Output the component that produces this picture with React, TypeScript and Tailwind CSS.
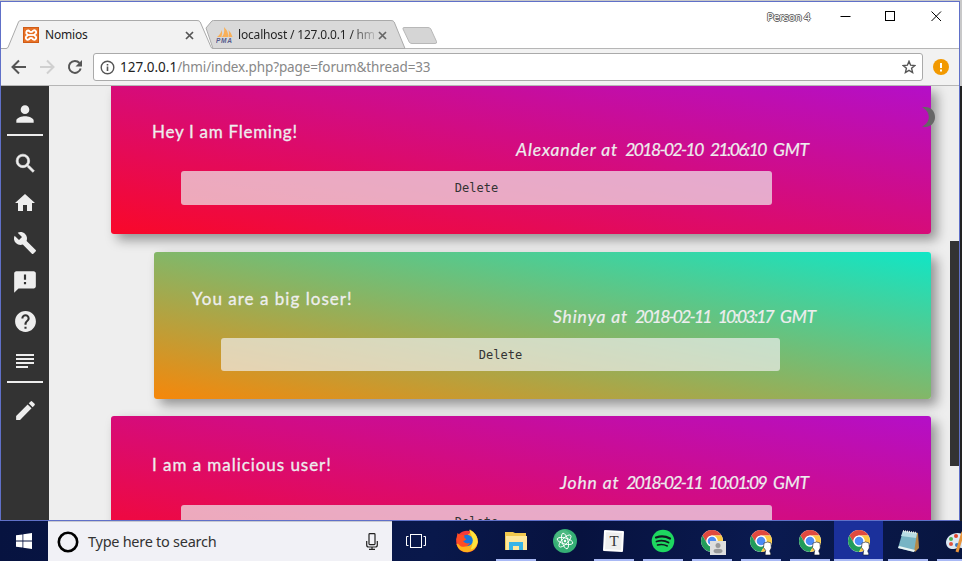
import React from "react";

type PostProps = {
  message: string;
  author: string;
  date: string;
  time: string;
  card: string;
  messageClass: string;
  authorClass: string;
  nameClass: string;
  dateClass: string;
  timeClass: string;
  buttonClass: string;
};

function Post({ message, author, date, time, card, messageClass, authorClass, nameClass, dateClass, timeClass, buttonClass }: PostProps) {
  return (
    <article className={`flex shrink-0 flex-col font-['Lato',sans-serif] text-[#eee] shadow-[6px_6px_12px_rgba(0,0,0,0.38)] ${card}`}>
      <p className={`h-5 whitespace-nowrap text-[17px] leading-5 [-webkit-text-stroke:0.3px_#eee] ${messageClass}`}>{message}</p>
      <p className={`-mt-0.5 flex h-5 justify-between self-end whitespace-nowrap text-[17.5px] italic leading-5 [-webkit-text-stroke:0.2px_#eee] ${authorClass}`}>
        <span className={nameClass}>{author} at</span>
        <span className={dateClass}>{date}</span>
        <span className={timeClass}>{time}</span>
        <span className="tracking-[-0.2px]">GMT</span>
      </p>
      <button className={`shrink-0 rounded-[3px] bg-[#eee]/70 font-['DejaVu_Sans_Mono',monospace] text-[12px] text-[#333] ${buttonClass}`}>
        Delete
      </button>
    </article>
  );
}

function Glyph({ d, className = "" }: { d: string; className?: string }) {
  return (
    <svg viewBox="0 0 24 24" className={`shrink-0 fill-[#eee] ${className}`}>
      <path d={d} />
    </svg>
  );
}

function Sidebar() {
  return (
    <nav className="flex w-12 shrink-0 flex-col items-center bg-[#333] pt-[15px]">
      <Glyph className="size-[26px]" d="M12 12c2.21 0 4-1.79 4-4s-1.79-4-4-4-4 1.79-4 4 1.79 4 4 4zm0 2c-2.67 0-8 1.34-8 4v2h16v-2c0-2.66-5.33-4-8-4z" />
      <div className="mt-[7px] h-0.5 w-9 shrink-0 bg-[#eee]" />
      <Glyph className="mt-[15px] size-[25px] stroke-[#eee] stroke-[0.6]" d="M15.5 14h-.79l-.28-.27A6.471 6.471 0 0 0 16 9.5 6.5 6.5 0 1 0 9.5 16c1.61 0 3.09-.59 4.23-1.57l.27.28v.79l5 4.99L20.49 19l-4.99-5zm-6 0C7.01 14 5 11.99 5 9.5S7.01 5 9.5 5 14 7.01 14 9.5 11.99 14 9.5 14z" />
      <Glyph className="mt-[15px] size-6" d="M10 20v-6h4v6h5v-8h3L12 3 2 12h3v8z" />
      <Glyph className="mt-4 size-6" d="M22.7 19l-9.1-9.1c.9-2.3.4-5-1.5-6.9-2-2-5-2.4-7.4-1.3L9 6 6 9 1.6 4.7C.4 7.1.9 10.1 2.9 12.1c1.9 1.9 4.6 2.4 6.9 1.5l9.1 9.1c.4.4 1 .4 1.4 0l2.3-2.3c.5-.4.5-1.1.1-1.4z" />
      <Glyph className="mt-[14px] size-[26px]" d="M20 2H4c-1.1 0-1.99.9-1.99 2L2 22l4-4h14c1.1 0 2-.9 2-2V4c0-1.1-.9-2-2-2zm-7 12h-2v-2h2v2zm0-4h-2V5h2v5z" />
      <Glyph className="mt-[14px] size-[25px]" d="M12 2C6.48 2 2 6.48 2 12s4.48 10 10 10 10-4.48 10-10S17.52 2 12 2zm1 17h-2v-2h2v2zm2.07-7.75l-.9.92C13.45 12.9 13 13.5 13 15h-2v-.5c0-1.1.45-2.1 1.17-2.83l1.24-1.26c.37-.36.59-.86.59-1.41 0-1.1-.9-2-2-2s-2 .9-2 2H8c0-2.21 1.79-4 4-4s4 1.790 4 4c0 .88-.36 1.680-.93 2.250z" />
      <div className="mt-5 flex w-[18px] flex-col gap-0.5">
        <div className="h-0.5 bg-[#eee]" />
        <div className="h-0.5 bg-[#eee]" />
        <div className="h-0.5 bg-[#eee]" />
        <div className="h-0.5 w-3 bg-[#eee]" />
      </div>
      <div className="mt-[13px] h-0.5 w-9 shrink-0 bg-[#eee]" />
      <Glyph className="mt-[15px] size-[25px]" d="M3 17.25V21h3.75L17.81 9.94l-3.75-3.75L3 17.25zM20.71 7.04a.996.996 0 0 0 0-1.41l-2.34-2.34a.996.996 0 0 0-1.41 0l-1.83 1.83 3.75 3.75 1.83-1.83z" />
    </nav>
  );
}

function TabStrip() {
  return (
    <header className="relative flex h-[47px] shrink-0 items-start border-b border-[#b6b6b6] bg-white font-['Noto_Sans',sans-serif] text-[12px] text-[#222]">
      <svg className="absolute left-0 top-[17px]" width="450" height="30" viewBox="1 19 450 30">
        <path d="M206 28 211 22q.7-1.500 2.500-1.500H391q2.500 0 3.200 1.500L405 48.500H213Z" fill="#d9d9d9" stroke="#aaa" />
        <path d="M1 48.500H6q1.500 0 2.200-1.500L18.500 22q.5-1.500 2.500-1.500H197q2.500 0 3.200 1.500L211 47q.6 1.500 2 1.500V50H1Z" fill="#f2f2f2" />
        <path d="M1 48.500H6q1.500 0 2.200-1.500L18.500 22q.5-1.500 2.500-1.500H197q2.500 0 3.200 1.500L211 47q.6 1.500 2 1.500" fill="none" stroke="#aaa" />
        <path d="M404 27.500H428q2 0 2.800 1.500L436.500 41.500q.7 2-1.500 2H412q-2 0-2.800-1.500L403 29q-.3-1.500 1-1.500Z" fill="#d5d5d5" stroke="#b8b8b8" />
      </svg>
      <div className="relative mt-[25px] flex h-4 w-[212px] shrink-0 items-center pl-[22px]">
        <svg width="16" height="16" viewBox="0 0 16 16">
          <rect width="16" height="16" rx="1" fill="#e87126" />
          <rect x=".5" y=".5" width="15" height="15" fill="none" stroke="#cf5c16" />
          <path d="M5.200 3.500a2 2 0 0 0-1 3.700q.7.800 0 1.600a2 2 0 1 0 2.500 2.600q1.300-.7 2.600 0a2 2 0 1 0 2.500-2.600q-.7-.8 0-1.600a2 2 0 1 0-2.500-2.600q-1.300.7-2.600 0a2 2 0 0 0-1.500-1.100Z" fill="none" stroke="#fff" strokeWidth="1.900" />
          <path d="M5 8h6" stroke="#fff" strokeWidth="1.800" />
        </svg>
        <span className="ml-[6px] tracking-[-0.2px]">Nomios</span>
        <svg className="absolute left-[184px] top-1" width="9" height="9" viewBox="0 0 9 9"><path d="m1 1 7 7M8 1 1 8" stroke="#555" strokeWidth="1.700" /></svg>
      </div>
      <div className="relative mt-[25px] flex h-4 w-[180px] shrink-0 items-center pl-[3px]">
        <svg width="17" height="16" viewBox="0 0 17 16">
          <path d="M1 10Q5 7 5.500 3 7 6 5.500 10ZM6 10Q9 6 8 0q5 5 4 10ZM12.500 10q1-4 0-7 3 3 4 7Z" fill="#f8b059" />
          <text x="0" y="15.500" fontFamily="Liberation Sans, sans-serif" fontSize="6.500" fontWeight="700" fontStyle="italic" fill="#565b8d" textLength="16">PMA</text>
        </svg>
        <span className="ml-[5px] whitespace-nowrap bg-linear-to-r from-[#222] from-82% to-[#222]/15 bg-clip-text tracking-[-0.18px] text-transparent">localhost / 127.0.0.1 / hm</span>
        <svg className="absolute left-[165px] top-1" width="9" height="9" viewBox="0 0 9 9"><path d="m1 1 7 7M8 1 1 8" stroke="#666" strokeWidth="1.700" /></svg>
      </div>
      <div className="flex grow items-center justify-end pr-[17px] pt-[7px]">
        <span className="mr-[30px] text-[11px] leading-4 tracking-[-0.3px] text-white [text-shadow:1px_0_#666,-1px_0_#666,0_1px_#666,0_-1px_#666]">Person 4</span>
        <svg width="102" height="12" viewBox="0 0 102 12" fill="none" stroke="#000">
          <path d="M.5 5.500h10" />
          <rect x="45.500" y=".5" width="9" height="9" />
          <path d="m91.500.500 9.500 9.500M101 .500l-9.500 9.500" />
        </svg>
      </div>
    </header>
  );
}

function Toolbar() {
  return (
    <div className="flex h-[37px] shrink-0 items-center border-b border-[#b6b6b6] bg-[#f2f2f2] font-['Noto_Sans',sans-serif]">
      <svg width="92" height="36" viewBox="1 49 92 36" fill="none" stroke="#555" strokeWidth="2">
        <path d="M26 67H13M19 60.500 12.500 67l6.500 6.500" />
        <path d="M40 67h13M47 60.500l6.500 6.500-6.500 6.500" stroke="#d0d0d0" />
        <path d="M79.500 63a6 6 0 1 0 1.200 5.500" />
        <path d="M82 60v6.500h-6.500Z" fill="#555" stroke="none" />
      </svg>
      <div className="flex h-7 w-[830px] items-center rounded-[3px] border border-[#aaa] bg-white pl-[6px] pr-[6px]">
        <svg width="15" height="15" viewBox="0 0 15 15"><circle cx="7.500" cy="7.500" r="6.300" fill="none" stroke="#555" strokeWidth="1.400" /><path d="M7.500 6.500V11M7.500 4v1.500" stroke="#555" strokeWidth="1.600" /></svg>
        <span className="ml-[5px] grow whitespace-nowrap text-[13.5px] leading-6 tracking-[-0.12px] text-[#888]"><span className="tracking-normal text-[#222]">127.0.0.1</span>/hmi/index.php?page=forum&amp;thread=33</span>
        <svg width="14" height="14" viewBox="0 0 14 14"><path d="m7 1.300 1.600 3.900 4.200.4-3.200 2.700 1 4.200L7 10.300l-3.600 2.200 1-4.200L1.200 5.600l4.200-.4Z" fill="none" stroke="#555" strokeWidth="1.400" /></svg>
      </div>
      <svg className="ml-[10px]" width="16" height="16" viewBox="0 0 16 16"><circle cx="8" cy="8" r="8" fill="#f29900" /><path d="M8 4v5M8 10.500v2" stroke="#fff" strokeWidth="2" /></svg>
    </div>
  );
}

function Forum() {
  return (
    <main className="relative flex grow overflow-hidden bg-[#eee]">
      <Sidebar />
      <section className="flex w-[882px] flex-col items-end">
        <Post
          message="Hey I am Fleming!"
          author="Alexander"
          date="2018-02-10"
          time="21:06:10"
          card="h-[148px] w-[820px] rounded-b-[3px] bg-[linear-gradient(to_top_right,#f90829,#b40fc8)] pt-9"
          messageClass="ml-[41px] tracking-[0.72px]"
          authorClass="mr-[122px] w-[293px]"
          nameClass="tracking-[0.85px]"
          dateClass="tracking-[-1.6px]"
          timeClass="tracking-[-1.6px]"
          buttonClass="ml-[70px] mt-[11px] h-[34px] w-[591px]"
        />
        <Post
          message="You are a big loser!"
          author="Shinya"
          date="2018-02-11"
          time="10:03:17"
          card="mt-[18px] h-[147px] w-[777px] rounded-[3px] bg-[linear-gradient(to_top_right,#f6870a,#10e6c6)] pt-[37px]"
          messageClass="ml-[38px] tracking-[1.02px]"
          authorClass="mr-[115px] w-[263px]"
          nameClass="tracking-[0.85px]"
          dateClass="tracking-[-1.8px]"
          timeClass="tracking-[-1.8px]"
          buttonClass="ml-[67px] mt-[11px] h-[33px] w-[559px]"
        />
        <Post
          message="I am a malicious user!"
          author="John"
          date="2018-02-11"
          time="10:01:09"
          card="mt-[17px] h-[147px] w-[820px] rounded-[3px] bg-[linear-gradient(to_top_right,#f90829,#b40fc8)] pt-[39px]"
          messageClass="ml-[41px] tracking-[0.95px]"
          authorClass="mr-[122px] w-[249px]"
          nameClass="tracking-[0.85px]"
          dateClass="tracking-[-1.8px]"
          timeClass="tracking-[-1.5px]"
          buttonClass="ml-[70px] mt-[12px] h-[34px] w-[591px]"
        />
      </section>
      <svg className="absolute left-[921px] top-[21px]" width="14" height="20" viewBox="0 0 14 20"><path d="M0 .5C8-1.500 13 4 13 10S8 21.500 0 19.500C9 16 9 4 0 .5Z" fill="#666" /></svg>
      <div className="absolute right-0 top-[155px] h-[225px] w-[9px] bg-[#333]" />
    </main>
  );
}

function Slot({ children, bar = true, active = false }: { children: React.ReactNode; bar?: boolean; active?: boolean }) {
  return (
    <div className={`flex h-full w-[49px] shrink-0 flex-col items-center justify-between pt-2 ${active ? "bg-[#1b309b]" : ""}`}>
      {children}
      {bar && <div className={`h-0.5 bg-[#a9b9f5] ${active ? "w-full" : "w-10"}`} />}
    </div>
  );
}

function Chrome({ badge }: { badge: "person" | "bust" }) {
  return (
    <svg width="28" height="28" viewBox="0 0 28 28" className="shrink-0">
      <circle cx="14" cy="12" r="11" fill="#fff" />
      <path d="M4.500 6.500A11 11 0 0 1 23.500 6.500H14A5.500 5.500 0 0 0 9.200 14.800Z" fill="#e04a3f" />
      <path d="M4.500 6.500A11 11 0 0 0 14 23L18.800 14.800A5.500 5.500 0 0 1 9.200 14.800Z" fill="#229c5a" />
      <path d="M23.500 6.500A11 11 0 0 1 14 23L18.800 14.800A5.500 5.500 0 0 0 14 6.500Z" fill="#fbcb43" />
      <circle cx="14" cy="12" r="5.500" fill="#fff" />
      <circle cx="14" cy="12" r="4.300" fill="#4c8bf5" />
      {badge === "person" ? (
        <g>
          <rect x="12" y="12" width="16" height="14" fill="#dedede" />
          <circle cx="20" cy="16.500" r="2.500" fill="#999" />
          <ellipse cx="20" cy="22" rx="4.500" ry="2.300" fill="#999" />
        </g>
      ) : (
        <path d="M17 14q4-2 7 0l.3 5-1.600 3 1 2.500v1.500h-5.500v-2l.5-2.500-2.200-3Z" fill="#fff" stroke="#111827" strokeWidth=".6" />
      )}
    </svg>
  );
}

function Taskbar() {
  return (
    <footer className="flex h-10 shrink-0 overflow-hidden bg-[linear-gradient(100deg,#071340,#09184b_45%,#07123f_60%,#0a1a50_80%,#08153f)]">
      <div className="flex w-12 shrink-0 items-center justify-center">
        <svg width="16" height="16" viewBox="0 0 16 16" fill="#fff"><path d="M0 2.300 6.500 1.400v6.200H0ZM7.300 1.300 16 0v7.600H7.300ZM0 8.400h6.500v6.200L0 13.700ZM7.300 8.400H16V16l-8.700-1.200Z" /></svg>
      </div>
      <div className="flex w-[344px] shrink-0 items-center border-t border-[#c9c9d0] bg-[#f1f1f6] pl-[9px] pr-[14px]">
        <svg width="22" height="22" viewBox="0 0 22 22"><circle cx="11" cy="11" r="9.200" fill="none" stroke="#000" strokeWidth="2.600" /></svg>
        <span className="ml-[9px] grow font-['Noto_Sans',sans-serif] text-[14.5px] tracking-[-0.27px] text-[#333]">Type here to search</span>
        <svg width="12" height="17" viewBox="0 0 12 17" fill="none" stroke="#222" strokeWidth="1.200"><rect x="3" y=".6" width="6" height="11" rx=".8" /><path d="M.7 8v4q0 2 2 2h6.600q2 0 2-2V8M6 14v2.500M3 16.400h6" /></svg>
      </div>
      <div className="flex w-[50px] shrink-0 items-center pl-[14px]">
        <svg width="20" height="16" viewBox="0 0 20 16" fill="none" stroke="#fff"><rect x="4.500" y="1.500" width="11" height="13" /><path d="M2.500 3.500h-2v9h2M17.500 3.500h2v9h-2" /></svg>
      </div>
      <Slot bar={false}>
        <svg width="24" height="24" viewBox="0 0 24 24">
          <circle cx="12" cy="12.500" r="10.800" fill="#f63b38" />
          <path d="M1.500 15q2 8 11 8.300 9-1 10.300-10Q23 5 15 .5q1 4-2 5l-4 7Z" fill="#ffb21a" />
          <path d="M14 .5Q23 5 22.800 13q-2 7-7 7.500 4-9-1.800-20Z" fill="#ffe33d" />
          <circle cx="12" cy="11.500" r="5.800" fill="#1676dd" />
          <path d="M1.300 10.500 2.500 4 5 6q3-1 4.500 1-1 2 2 3-1.500 2-3.500 2 2.500 3.500 7 2-3 5-9 3.500-3.500-2-4.700-7Z" fill="#ff4c25" />
        </svg>
      </Slot>
      <Slot>
        <svg width="22" height="24" viewBox="0 0 22 24">
          <path d="M0 3h8l2 1h11v17H0Z" fill="#f2c94e" /><path d="M1 7h21v14H1Z" fill="#ffe89c" />
          <path d="M4 13h14v8h-4v-4H8v4H4Z" fill="#36b5e8" />
        </svg>
      </Slot>
      <Slot bar={false}>
        <svg width="24" height="24" viewBox="0 0 24 24">
          <circle cx="12" cy="12" r="12" fill="#35af75" /><circle cx="10" cy="9" r="8" fill="#62c48d" opacity=".5" />
          <g fill="none" stroke="#fff" strokeWidth=".9"><ellipse cx="12" cy="12" rx="8" ry="3" transform="rotate(15 12 12)" /><ellipse cx="12" cy="12" rx="8" ry="3" transform="rotate(75 12 12)" /><ellipse cx="12" cy="12" rx="8" ry="3" transform="rotate(135 12 12)" /></g>
          <circle cx="12" cy="12" r="1.200" fill="#fff" />
        </svg>
      </Slot>
      <Slot>
        <svg width="24" height="24" viewBox="0 0 24 24"><path d="m3 2 18 1-1 19-18-1Z" fill="#eee" stroke="#fff" strokeWidth="2" strokeLinejoin="round" /><text x="12" y="17" textAnchor="middle" fontFamily="Liberation Serif, serif" fontSize="15" fill="#333">T</text></svg>
      </Slot>
      <Slot>
        <svg width="24" height="24" viewBox="0 0 24 24"><circle cx="12" cy="12" r="11.300" fill="#1ed760" /><g fill="none" stroke="#101820" strokeLinecap="round"><path d="M5 8.500q7.500-2.500 14 1" strokeWidth="2.200" /><path d="M5.500 12.500q6.500-2 12 1" strokeWidth="1.800" /><path d="M6.500 16q5-1.500 9.800 1" strokeWidth="1.500" /></g></svg>
      </Slot>
      <Slot><Chrome badge="person" /></Slot>
      <Slot><Chrome badge="bust" /></Slot>
      <Slot><Chrome badge="bust" /></Slot>
      <Slot active><Chrome badge="bust" /></Slot>
      <Slot>
        <svg width="24" height="24" viewBox="0 0 24 24"><path d="m7 2 15 2 1 15-4 4Z" fill="#b58a48" /><path d="m7 2 14 2-3 19-16-4Z" fill="#78b4c4" /><path d="m7 2 14 2-1 5-15-2Z" fill="#b8dce4" /><path d="m3 17 16 4-1 2-16-4Z" fill="#e9f3f2" /><path d="m7 2 14 2" stroke="#eee" strokeDasharray="1 1" strokeWidth="2" /></svg>
      </Slot>
      <Slot>
        <svg width="28" height="26" viewBox="0 0 28 26"><path d="M3 13C4 6 12 2 20 5s8 10 3 13-6-1-9 1S3 21 3 13Z" fill="#dce8f5" /><circle cx="8" cy="10" r="2" fill="#4caf50" /><circle cx="13" cy="7" r="2" fill="#e0442e" /><circle cx="8" cy="15" r="2" fill="#e05342" /><circle cx="14" cy="16" r="2" fill="#3478c4" /><path d="M20 3 14 23" stroke="#e8943b" strokeWidth="3" /></svg>
      </Slot>
    </footer>
  );
}

export default function App() {
  return (
    <div className="flex h-[561px] w-[962px] flex-col overflow-hidden bg-[#c8c8c8]">
      <div className="mt-px flex h-[520px] shrink-0">
        <div className="flex w-[960px] shrink-0 flex-col border border-[#6070c8]">
          <TabStrip />
          <Toolbar />
          <Forum />
        </div>
        <div className="w-0.5 bg-[linear-gradient(#c8c8c8_0_85px,#222_85px)]" />
      </div>
      <Taskbar />
    </div>
  );
}
